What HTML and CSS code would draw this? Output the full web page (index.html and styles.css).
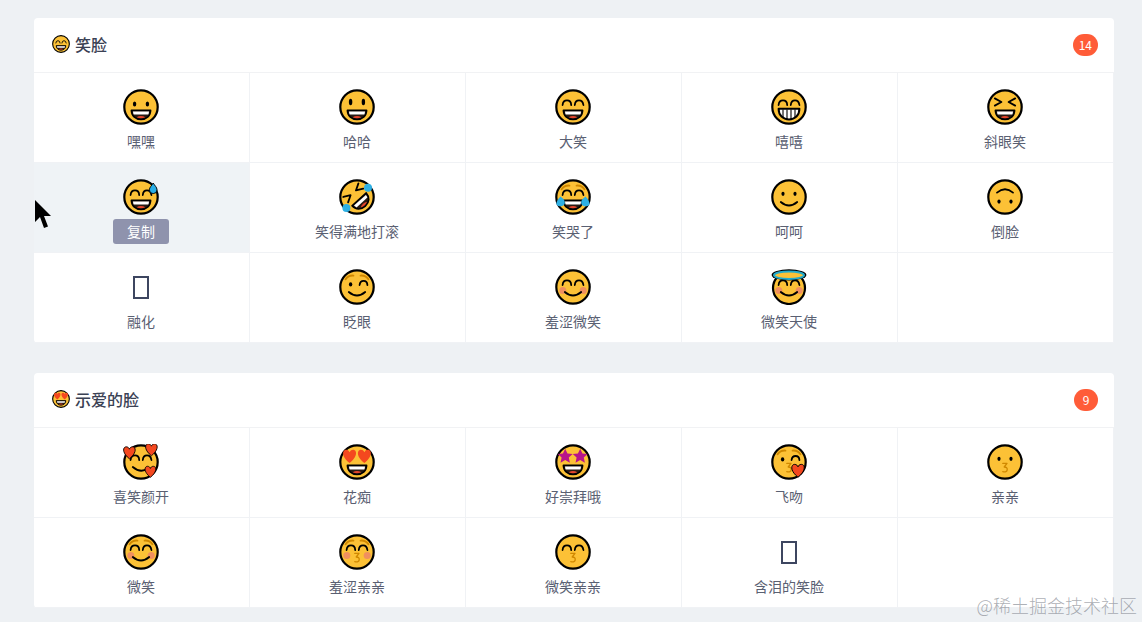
FILE: index.html
```html
<!DOCTYPE html>
<html lang="zh-CN">
<head>
<meta charset="utf-8">
<title>Emoji</title>
<link rel="stylesheet" href="styles.css">
</head>
<body>
<svg class="defs" xmlns="http://www.w3.org/2000/svg" aria-hidden="true">
  <defs>
    <circle id="face" class="face" cx="18" cy="18" r="16.7"/>
    <path id="heart" class="heart" d="M0 4.6C-6-.2-5-4.6-2.4-4.6-1.1-4.6-.3-3.7 0-2.8.3-3.7 1.1-4.6 2.4-4.6 5-4.6 6-.2 0 4.6Z"/>
    <polygon id="star" class="star" points="0,-6.4 1.9,-2.4 6.2,-2 3,.9 3.9,5.2 0,3 -3.9,5.2 -3,.9 -6.2,-2 -1.9,-2.4"/>
    <g id="eyes"><ellipse class="ink" cx="11.6" cy="15" rx="1.7" ry="2.5"/><ellipse class="ink" cx="24.4" cy="15" rx="1.7" ry="2.5"/></g>
    <g id="dots"><ellipse class="ink" cx="12" cy="14.8" rx="1.6" ry="2.1"/><ellipse class="ink" cx="24" cy="14.8" rx="1.6" ry="2.1"/></g>
    <path id="arceyes" class="line" d="M7.6 16Q8 11.4 12 11.4T16.2 16M19.8 16Q20.2 11.4 24 11.4T28.4 16"/>
    <path id="brows" class="brow" d="M6.6 10.2Q9.6 6.2 14.4 6.6M21.6 6.6Q26.4 6.2 29.4 10.2"/>
    <path id="smile" class="line" d="M9.8 23Q18 30 26.2 23"/>
    <path id="kiss" class="brow thin" d="M15.8 19.4H20L17.2 23Q20.6 23 20.2 25.8 19.8 28.6 15.8 27.6"/>
    <g id="cheeks"><circle class="cheek" cx="7.8" cy="21.4" r="3.5"/><circle class="cheek" cx="28.2" cy="21.4" r="3.5"/></g>
    <g id="mouth">
      <path class="mouth" d="M8.4 21.2H27.6C27.6 26.8 23.6 30.4 18 30.4S8.4 26.8 8.4 21.2Z"/>
      <path class="teeth" d="M10 22.4H26C26 23.6 25.7 24.6 25.3 25.4H10.7C10.3 24.6 10 23.6 10 22.4Z"/>
      <path class="tongue" d="M13.6 28.2Q18 25.8 22.4 28.2 18 30.2 13.6 28.2Z"/>
    </g>
    <path id="drop" class="drop" d="M0-5.4C1.6-2.6 3.8-1.2 3.8 1.4A3.8 3.8 0 0 1-3.8 1.4C-3.8-1.2-1.6-2.6 0-5.4Z"/>
  </defs>

  <symbol id="e1" viewBox="0 0 36 36"><use href="#face"/><use href="#eyes"/><use href="#mouth"/></symbol>
  <symbol id="e2" viewBox="0 0 36 36"><use href="#face"/><ellipse class="ink" cx="11.6" cy="13" rx="1.7" ry="3.2"/><ellipse class="ink" cx="24.4" cy="13" rx="1.7" ry="3.2"/><use href="#mouth"/></symbol>
  <symbol id="e3" viewBox="0 0 36 36"><use href="#face"/><use href="#arceyes"/><use href="#mouth"/></symbol>
  <symbol id="e4" viewBox="0 0 36 36"><use href="#face"/><use href="#arceyes"/>
    <path class="teethbox" d="M7.6 19.8H28.4C28.4 26.4 24 30.4 18 30.4S7.6 26.4 7.6 19.8Z"/>
    <path class="teethlines" d="M12 20.4V28.2M16 20.4V30M20 20.4V30M24 20.4V28.2"/></symbol>
  <symbol id="e5" viewBox="0 0 36 36"><use href="#face"/><path class="line" d="M7.8 9.4L14.4 13 7.8 16.6M28.2 9.4L21.6 13 28.2 16.6"/><use href="#mouth"/></symbol>
  <symbol id="e6" viewBox="0 0 36 36"><use href="#face"/><use href="#arceyes"/><use href="#mouth"/><use href="#drop" transform="translate(30.2 9.4)"/></symbol>
  <symbol id="e7" viewBox="0 0 36 36"><use href="#face"/>
    <g transform="rotate(-42 18 18)"><path class="line" d="M7.8 8.8L14.4 12.4 7.8 16M28.2 8.8L21.6 12.4 28.2 16"/><use href="#mouth"/></g>
    <circle class="tear" cx="29" cy="8.8" r="4"/><circle class="tear" cx="7.4" cy="29" r="4"/></symbol>
  <symbol id="e8" viewBox="0 0 36 36"><use href="#face"/><use href="#brows"/><use href="#arceyes"/><use href="#mouth"/>
    <path class="tear" d="M5.6 17.6C7.6 19.6 10.2 21 9.8 24.2 9.4 27.4 4.4 28.4 1.8 26 .8 25 2 20.6 5.6 17.6Z"/><path class="tear" d="M30.4 17.6C28.4 19.6 25.8 21 26.2 24.2 26.6 27.4 31.6 28.4 34.2 26 35.2 25 34 20.6 30.4 17.6Z"/></symbol>
  <symbol id="e9" viewBox="0 0 36 36"><use href="#face"/><use href="#dots"/><use href="#smile"/></symbol>
  <symbol id="e10" viewBox="0 0 36 36"><use href="#face"/><ellipse class="ink" cx="12" cy="22.6" rx="1.6" ry="2.1"/><ellipse class="ink" cx="24" cy="22.6" rx="1.6" ry="2.1"/><path class="line" d="M10 13.6Q18 7 26 13.6"/></symbol>
  <symbol id="e11" viewBox="0 0 36 36"><use href="#face"/><use href="#brows"/><ellipse class="ink" cx="11.6" cy="15.4" rx="1.7" ry="2.1"/><path class="line" d="M20.6 16Q21 11.8 24.6 11.8T28.4 16"/><use href="#smile"/></symbol>
  <symbol id="e12" viewBox="0 0 36 36"><use href="#face"/><use href="#cheeks"/><use href="#arceyes"/><use href="#smile"/></symbol>
  <symbol id="e13" viewBox="0 0 36 36"><circle class="face" cx="18" cy="19" r="16"/><use href="#cheeks"/><use href="#arceyes"/><use href="#smile"/>
    <ellipse class="halo" cx="18" cy="5.9" rx="17.4" ry="5.6"/><ellipse class="halo-ring" cx="18" cy="6.2" rx="15" ry="3.8"/></symbol>
  <symbol id="e14" viewBox="0 0 36 36"><use href="#face"/><use href="#arceyes"/><path class="line" d="M9.8 23Q18 30 25 24"/>
    <use class="outlined" href="#heart" transform="translate(6.4 8.8) scale(1.3)"/><use class="outlined" href="#heart" transform="translate(28.4 5.8) scale(1.3)"/><use class="outlined" href="#heart" transform="translate(27.4 27.8) scale(1.2)"/></symbol>
  <symbol id="e15" viewBox="0 0 36 36"><use href="#face"/><use href="#heart" transform="translate(10.6 12.4) scale(1.45)"/><use href="#heart" transform="translate(25.4 12.4) scale(1.45)"/><use href="#mouth"/></symbol>
  <symbol id="e16" viewBox="0 0 36 36"><use href="#face"/><use href="#star" transform="translate(10.2 12.4) scale(1.2)"/><use href="#star" transform="translate(25.2 12.4) scale(1.2)"/><use href="#mouth"/></symbol>
  <symbol id="e17" viewBox="0 0 36 36"><use href="#face"/><use href="#brows"/><ellipse class="ink" cx="11.6" cy="15.4" rx="1.7" ry="2.1"/><path class="line" d="M20.6 16Q21 12 24.6 12T28.4 16"/><use href="#kiss"/><use class="outlined" href="#heart" transform="translate(27 26.8) scale(1.4)"/></symbol>
  <symbol id="e18" viewBox="0 0 36 36"><use href="#face"/><use href="#dots"/><use href="#kiss"/></symbol>
  <symbol id="e19" viewBox="0 0 36 36"><use href="#face"/><use href="#brows"/><use href="#cheeks"/><use href="#arceyes"/><use href="#smile"/></symbol>
  <symbol id="e20" viewBox="0 0 36 36"><use href="#face"/><use href="#brows"/><use href="#cheeks"/><use href="#arceyes"/><use href="#kiss"/></symbol>
  <symbol id="e21" viewBox="0 0 36 36"><use href="#face"/><use href="#arceyes"/><use href="#kiss"/></symbol>
</svg>

<section class="card">
  <header class="card-head">
    <h2 class="card-title"><svg class="emoji-small"><use href="#e3"/></svg>笑脸</h2>
    <span class="badge">14</span>
  </header>
  <div class="grid">
    <div class="cell"><svg class="emoji"><use href="#e1"/></svg><span class="label">嘿嘿</span></div>
    <div class="cell"><svg class="emoji"><use href="#e2"/></svg><span class="label">哈哈</span></div>
    <div class="cell"><svg class="emoji"><use href="#e3"/></svg><span class="label">大笑</span></div>
    <div class="cell"><svg class="emoji"><use href="#e4"/></svg><span class="label">嘻嘻</span></div>
    <div class="cell"><svg class="emoji"><use href="#e5"/></svg><span class="label">斜眼笑</span></div>
    <div class="cell cell-hover"><svg class="emoji"><use href="#e6"/></svg><span class="copy">复制</span>
      <svg class="cursor" viewBox="0 0 18 30"><path d="M1 0V22L6 17 10 28 14 26.5 10 16H17Z"/></svg></div>
    <div class="cell"><svg class="emoji"><use href="#e7"/></svg><span class="label">笑得满地打滚</span></div>
    <div class="cell"><svg class="emoji"><use href="#e8"/></svg><span class="label">笑哭了</span></div>
    <div class="cell"><svg class="emoji"><use href="#e9"/></svg><span class="label">呵呵</span></div>
    <div class="cell"><svg class="emoji"><use href="#e10"/></svg><span class="label">倒脸</span></div>
    <div class="cell"><span class="tofu-box"><span class="tofu"></span></span><span class="label">融化</span></div>
    <div class="cell"><svg class="emoji"><use href="#e11"/></svg><span class="label">眨眼</span></div>
    <div class="cell"><svg class="emoji"><use href="#e12"/></svg><span class="label">羞涩微笑</span></div>
    <div class="cell"><svg class="emoji"><use href="#e13"/></svg><span class="label">微笑天使</span></div>
    <div class="cell"></div>
  </div>
</section>

<section class="card">
  <header class="card-head">
    <h2 class="card-title"><svg class="emoji-small"><use href="#e15"/></svg>示爱的脸</h2>
    <span class="badge">9</span>
  </header>
  <div class="grid">
    <div class="cell"><svg class="emoji"><use href="#e14"/></svg><span class="label">喜笑颜开</span></div>
    <div class="cell"><svg class="emoji"><use href="#e15"/></svg><span class="label">花痴</span></div>
    <div class="cell"><svg class="emoji"><use href="#e16"/></svg><span class="label">好崇拜哦</span></div>
    <div class="cell"><svg class="emoji"><use href="#e17"/></svg><span class="label">飞吻</span></div>
    <div class="cell"><svg class="emoji"><use href="#e18"/></svg><span class="label">亲亲</span></div>
    <div class="cell"><svg class="emoji"><use href="#e19"/></svg><span class="label">微笑</span></div>
    <div class="cell"><svg class="emoji"><use href="#e20"/></svg><span class="label">羞涩亲亲</span></div>
    <div class="cell"><svg class="emoji"><use href="#e21"/></svg><span class="label">微笑亲亲</span></div>
    <div class="cell"><span class="tofu-box"><span class="tofu"></span></span><span class="label">含泪的笑脸</span></div>
    <div class="cell"></div>
  </div>
</section>

<div class="watermark">@稀土掘金技术社区</div>
</body>
</html>
```

FILE: styles.css
```css
* { box-sizing: border-box; }

html, body { height: 100%; }

body {
  margin: 0;
  padding: 18px 28px 0 34px;
  display: flex;
  flex-direction: column;
  gap: 30px;
  overflow: hidden;
  position: relative;
  background: #eef1f4;
  font-family: "Noto Sans CJK SC", "Noto Sans", sans-serif;
  color: #515767;
}

.defs { position: absolute; width: 0; height: 0; overflow: hidden; }

.card {
  background: #fff;
  border-radius: 4px;
}

.card-head {
  height: 55px;
  padding: 0 16px 1px 18px;
  display: flex;
  align-items: center;
  justify-content: space-between;
  border-bottom: 1px solid #f1f2f4;
}

.card-title {
  margin: 0 0 2px;
  display: flex;
  align-items: center;
  gap: 5px;
  font-size: 16px;
  font-weight: 500;
  line-height: 24px;
  color: #3a4154;
}

.emoji-small { width: 18px; height: 18px; display: block; }

.badge {
  min-width: 24px;
  height: 22px;
  padding: 0 6px;
  border-radius: 11px;
  background: #ff5c38;
  color: #fff;
  font-size: 12px;
  line-height: 22px;
  text-align: center;
}

.grid {
  display: grid;
  grid-template-columns: repeat(5, 1fr);
  grid-auto-rows: 90px;
}

.cell {
  position: relative;
  padding: 16px 1px 0 0;
  display: flex;
  flex-direction: column;
  align-items: center;
  border-right: 1px solid #f0f2f5;
  border-bottom: 1px solid #f0f2f5;
}

.cell-hover { background: #eff3f6; }

.emoji { width: 36px; height: 36px; display: block; flex: none; }

.tofu-box {
  width: 36px;
  height: 36px;
  flex: none;
  display: flex;
  align-items: center;
  justify-content: center;
}

.tofu {
  display: block;
  width: 16px;
  height: 23px;
  border: 2px solid #3d4660;
}

.label {
  margin-top: 7px;
  font-size: 14px;
  line-height: 19px;
  color: #5a6072;
}

.copy {
  margin-top: 4px;
  width: 56px;
  height: 25px;
  border-radius: 3px;
  background: #8f93ad;
  color: #fff;
  font-size: 14px;
  line-height: 25px;
  text-align: center;
}

.cursor {
  position: absolute;
  left: 0;
  top: 37px;
  width: 18px;
  height: 30px;
  fill: #000;
}

.watermark {
  position: absolute;
  right: 5px;
  bottom: 4px;
  font-size: 18px;
  line-height: 26px;
  font-weight: 300;
  color: rgba(120, 124, 134, .62);
  white-space: nowrap;
}

/* emoji parts */
.face { fill: #fcc136; stroke: #000; stroke-width: 2.2; }
.ink { fill: #000; }
.line { fill: none; stroke: #000; stroke-width: 1.8; stroke-linecap: round; stroke-linejoin: round; }
.brow { fill: none; stroke: #d08800; stroke-width: 1.9; stroke-linecap: round; stroke-linejoin: round; }
.thin { stroke-width: 1.3; }
.cheek { fill: #f08f5f; }
.mouth { fill: #2a1c14; stroke: #000; stroke-width: 1.6; stroke-linejoin: round; }
.teeth { fill: #fff; }
.tongue { fill: #e5452c; }
.teethbox { fill: #fff; stroke: #000; stroke-width: 2; stroke-linejoin: round; }
.teethlines { fill: none; stroke: #000; stroke-width: 1.1; }
.drop { fill: #29aee6; stroke: #000; stroke-width: .9; stroke-linejoin: round; }
.tear { fill: #2eb0e4; }
.heart { fill: #f4481f; }
.outlined { stroke: #000; stroke-width: .7; }
.star { fill: #b8148a; }
.halo { fill: #000; }
.halo-ring { fill: #fcc136; stroke: #22aacb; stroke-width: 2; }
```
